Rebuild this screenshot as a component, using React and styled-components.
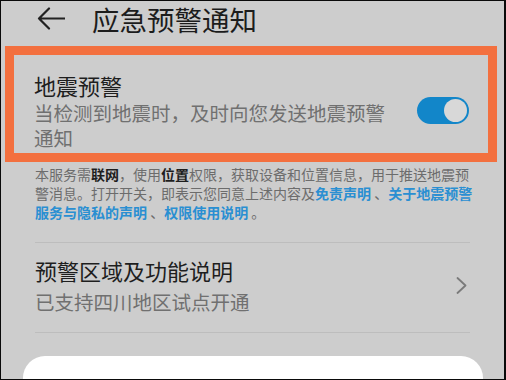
import React from "react";
import styled, { createGlobalStyle } from "styled-components";

const Global = createGlobalStyle`
  html, body { margin: 0; padding: 0; background: #000; }
  body { font-family: "Noto Sans CJK SC", "Noto Sans", sans-serif; }
`;

const Frame = styled.div`
  width: 506px;
  height: 380px;
  box-sizing: border-box;
  border-style: solid;
  border-color: #0a0a0a;
  border-width: 1px 2px 1px 1px;
  background: #cdcdcd;
  overflow: hidden;
  display: flex;
  flex-direction: column;
`;

const Header = styled.div`
  height: 45px;
  box-sizing: border-box;
  padding: 0 0 10px 36px;
  display: flex;
  align-items: center;
  gap: 27px;
  flex-shrink: 0;
`;

const Title = styled.div`
  font-size: 27.5px;
  line-height: 36px;
  color: #1c1c1c;
`;

const Highlight = styled.div`
  margin-left: 4px;
  width: 492px;
  box-sizing: border-box;
  border: 9px solid #f3703f;
  flex-shrink: 0;
`;

const Row = styled.div`
  display: flex;
  align-items: center;
  justify-content: space-between;
  padding: ${(p) => p.$pad};
`;

const TextCol = styled.div`
  width: ${(p) => p.$w};
  display: flex;
  flex-direction: column;
  gap: ${(p) => p.$gap || "0px"};
`;

const RowTitle = styled.div`
  font-size: 22px;
  line-height: 28px;
  color: #1e1e1e;
`;

const RowSub = styled.div`
  font-size: 19.5px;
  line-height: ${(p) => p.$lh || "24.5px"};
  color: #707070;
`;

const Toggle = styled.div`
  position: relative;
  width: 52px;
  height: 27px;
  border-radius: 14px;
  background: #1286c9;
  flex-shrink: 0;
`;

const Knob = styled.div`
  position: absolute;
  right: 2px;
  top: 2px;
  width: 23px;
  height: 23px;
  border-radius: 50%;
  background: #d8d8d8;
`;

const Notice = styled.p`
  margin: 3px 0 0 34px;
  width: 440px;
  font-size: 14px;
  line-height: 18.75px;
  color: #6c6c6c;
`;

const Strong = styled.b`
  color: #1e1e1e;
  font-weight: 700;
`;

const Link = styled.span`
  color: #2a8fd2;
  font-weight: 700;
`;

const Divider = styled.div`
  margin-left: 34px;
  width: 435px;
  height: 1px;
  background: #bdbdbd;
  flex-shrink: 0;
`;

const Card = styled.div`
  margin: 23px 0 0 22px;
  width: 460px;
  flex: 1;
  background: #ffffff;
  border-radius: 22px 22px 0 0;
`;

export default function App() {
  return (
    <>
      <Global />
      <Frame>
        <Header>
          <svg width="28" height="23" viewBox="0 0 28 23">
            <path
              d="M12 1.5 L2 11.5 L12 21.5 M2 11.5 H28"
              fill="none"
              stroke="#222"
              strokeWidth="2.2"
              strokeLinecap="round"
              strokeLinejoin="round"
            />
          </svg>
          <Title>应急预警通知</Title>
        </Header>
        <Highlight>
          <Row $pad="15.5px 19px 3px 20px">
            <TextCol $w="365px" $gap="2.75px">
              <RowTitle>地震预警</RowTitle>
              <RowSub>当检测到地震时，及时向您发送地震预警通知</RowSub>
            </TextCol>
            <Toggle>
              <Knob />
            </Toggle>
          </Row>
        </Highlight>
        <Notice>
          本服务需<Strong>联网</Strong>，使用<Strong>位置</Strong>权限，获取设备和位置信息，用于推送地震预警消息。打开开关，即表示您同意上述内容及<Link>免责声明</Link> 、<Link>关于地震预警服务与隐私的声明</Link> 、<Link>权限使用说明</Link> 。
        </Notice>
        <Divider style={{ marginTop: "20px" }} />
        <Row $pad="13.5px 37px 17.5px 34px">
          <TextCol $w="400px" $gap="6px">
            <RowTitle>预警区域及功能说明</RowTitle>
            <RowSub $lh="24px">已支持四川地区试点开通</RowSub>
          </TextCol>
          <svg width="11" height="17" viewBox="0 0 11 17">
            <path
              d="M1.5 1 L9.5 8.5 L1.5 16"
              fill="none"
              stroke="#7a7a7a"
              strokeWidth="1.8"
              strokeLinecap="round"
              strokeLinejoin="round"
            />
          </svg>
        </Row>
        <Divider />
        <Card />
      </Frame>
    </>
  );
}
